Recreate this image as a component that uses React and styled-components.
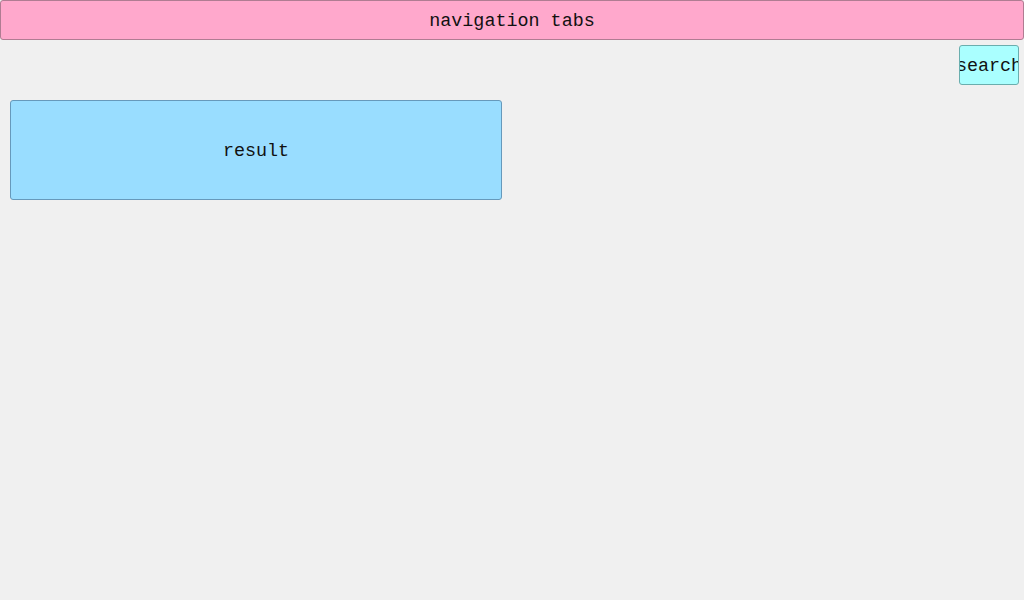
import React from 'react'
import styled, { createGlobalStyle } from 'styled-components'

const GlobalStyle = createGlobalStyle`
  html, body {
    margin: 0;
    padding: 0;
    background: #f0f0f0;
    font-family: "Liberation Mono", "DejaVu Sans Mono", monospace;
    color: #111;
  }
`

const Page = styled.div`
  display: flex;
  flex-direction: column;
  width: 1024px;
  height: 600px;
  box-sizing: border-box;
`

const Nav = styled.div`
  height: 40px;
  box-sizing: border-box;
  padding-top: 3px;
  background: #ffa8cc;
  border: 1px solid #b07c92;
  border-radius: 3px;
  display: flex;
  align-items: center;
  justify-content: center;
  font-size: 18.4px;
`

const SearchRow = styled.div`
  display: flex;
  justify-content: flex-end;
  padding: 5px 5px 0 0;
`

const SearchButton = styled.button`
  width: 60px;
  height: 40px;
  box-sizing: border-box;
  padding: 3px 0 0 0;
  background: #aaffff;
  border: 1px solid #6aaeae;
  border-radius: 3px;
  font-family: "Liberation Mono", "DejaVu Sans Mono", monospace;
  font-size: 18.4px;
  color: #111;
  display: flex;
  align-items: center;
  justify-content: center;
  white-space: nowrap;
  overflow: hidden;
`

const Results = styled.div`
  padding: 15px 0 0 10px;
`

const Result = styled.div`
  width: 492px;
  height: 100px;
  box-sizing: border-box;
  padding-top: 3px;
  background: #99ddff;
  border: 1px solid #6699bb;
  border-radius: 3px;
  display: flex;
  align-items: center;
  justify-content: center;
  font-size: 18.4px;
`

const App = () => {
  return (
    <Page>
      <GlobalStyle />
      <Nav>navigation tabs</Nav>
      <SearchRow>
        <SearchButton>search</SearchButton>
      </SearchRow>
      <Results>
        <Result>result</Result>
      </Results>
    </Page>
  )
}

export default App
